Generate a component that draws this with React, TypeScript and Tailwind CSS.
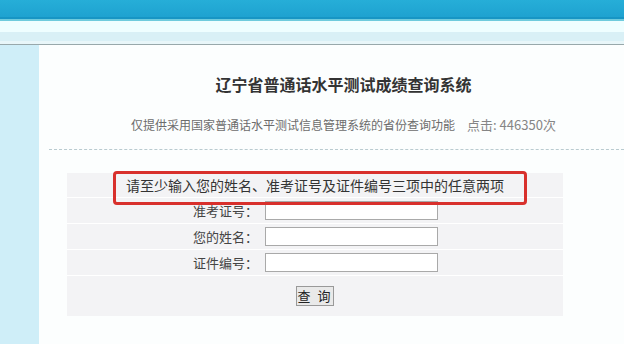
import React from "react";

export default function App() {
  const font = { fontFamily: '"Noto Sans CJK SC", "Noto Sans", sans-serif' };
  const rows = ["准考证号：", "您的姓名：", "证件编号："];
  return (
    <div className="w-[624px] h-[344px] overflow-hidden bg-[#fcfefe] flex flex-col" style={font}>
      <div className="h-[17px] bg-gradient-to-b from-[#26aed8] to-[#1ea2d0]" />
      <div className="h-[2px] bg-[#1795c4]" />
      <div className="h-[2px] bg-[#6fcbdd]" />
      <div className="h-[11px] bg-[#effeff]" />
      <div className="h-[9px] bg-[#d9f0f6]" />
      <div className="h-[3px] bg-[#e8f6f9]" />
      <div className="h-[1px] bg-[#98a8ab]" />
      <div className="flex flex-1">
        <div className="w-[39px] bg-[#cfeef8]" />
        <div className="flex-1 flex flex-col">
          <div className="pl-6 pt-[29px] flex flex-col items-center">
            <div className="text-[16px] leading-[20px] font-bold text-[#333]">辽宁省普通话水平测试成绩查询系统</div>
            <div className="mt-[22px] text-[12px] leading-[18px] text-[#6c6c6c] flex items-baseline gap-[12px]">
              <span>仅提供采用国家普通话水平测试信息管理系统的省份查询功能</span>
              <span className="text-[13px] text-[#858585]">点击: 446350次</span>
            </div>
          </div>
          <div className="ml-[10px] mt-[15px] border-t border-dashed border-[#b9cbd0]" />
          <div className="relative ml-[28px] mt-[23px] w-[496px] bg-[#f3f3f5] text-[#333]">
            <div className="h-[25px] flex items-center justify-center text-[14px] border-b border-white">
              请至少输入您的姓名、准考证号及证件编号三项中的任意两项
            </div>
            {rows.map((r) => (
              <div key={r} className="h-[26px] flex items-center border-b border-white">
                <div className="w-[191px] text-right text-[13px] text-[#444]">{r}</div>
                <input className="ml-[7px] w-[173px] h-[19px] bg-white border border-[#a9a9a9]" />
              </div>
            ))}
            <div className="h-[40px] flex items-center justify-center">
              <button className="w-[38px] h-[20px] bg-[#e9e9e9] border border-[#999] text-[13px] leading-[18px] text-[#222] tracking-[2px]">
                查 询
              </button>
            </div>
            <div className="absolute left-[46px] top-[-2px] w-[414px] h-[34px] border-[3px] border-[#d8302c] rounded-[4px]" />
          </div>
        </div>
      </div>
    </div>
  );
}
